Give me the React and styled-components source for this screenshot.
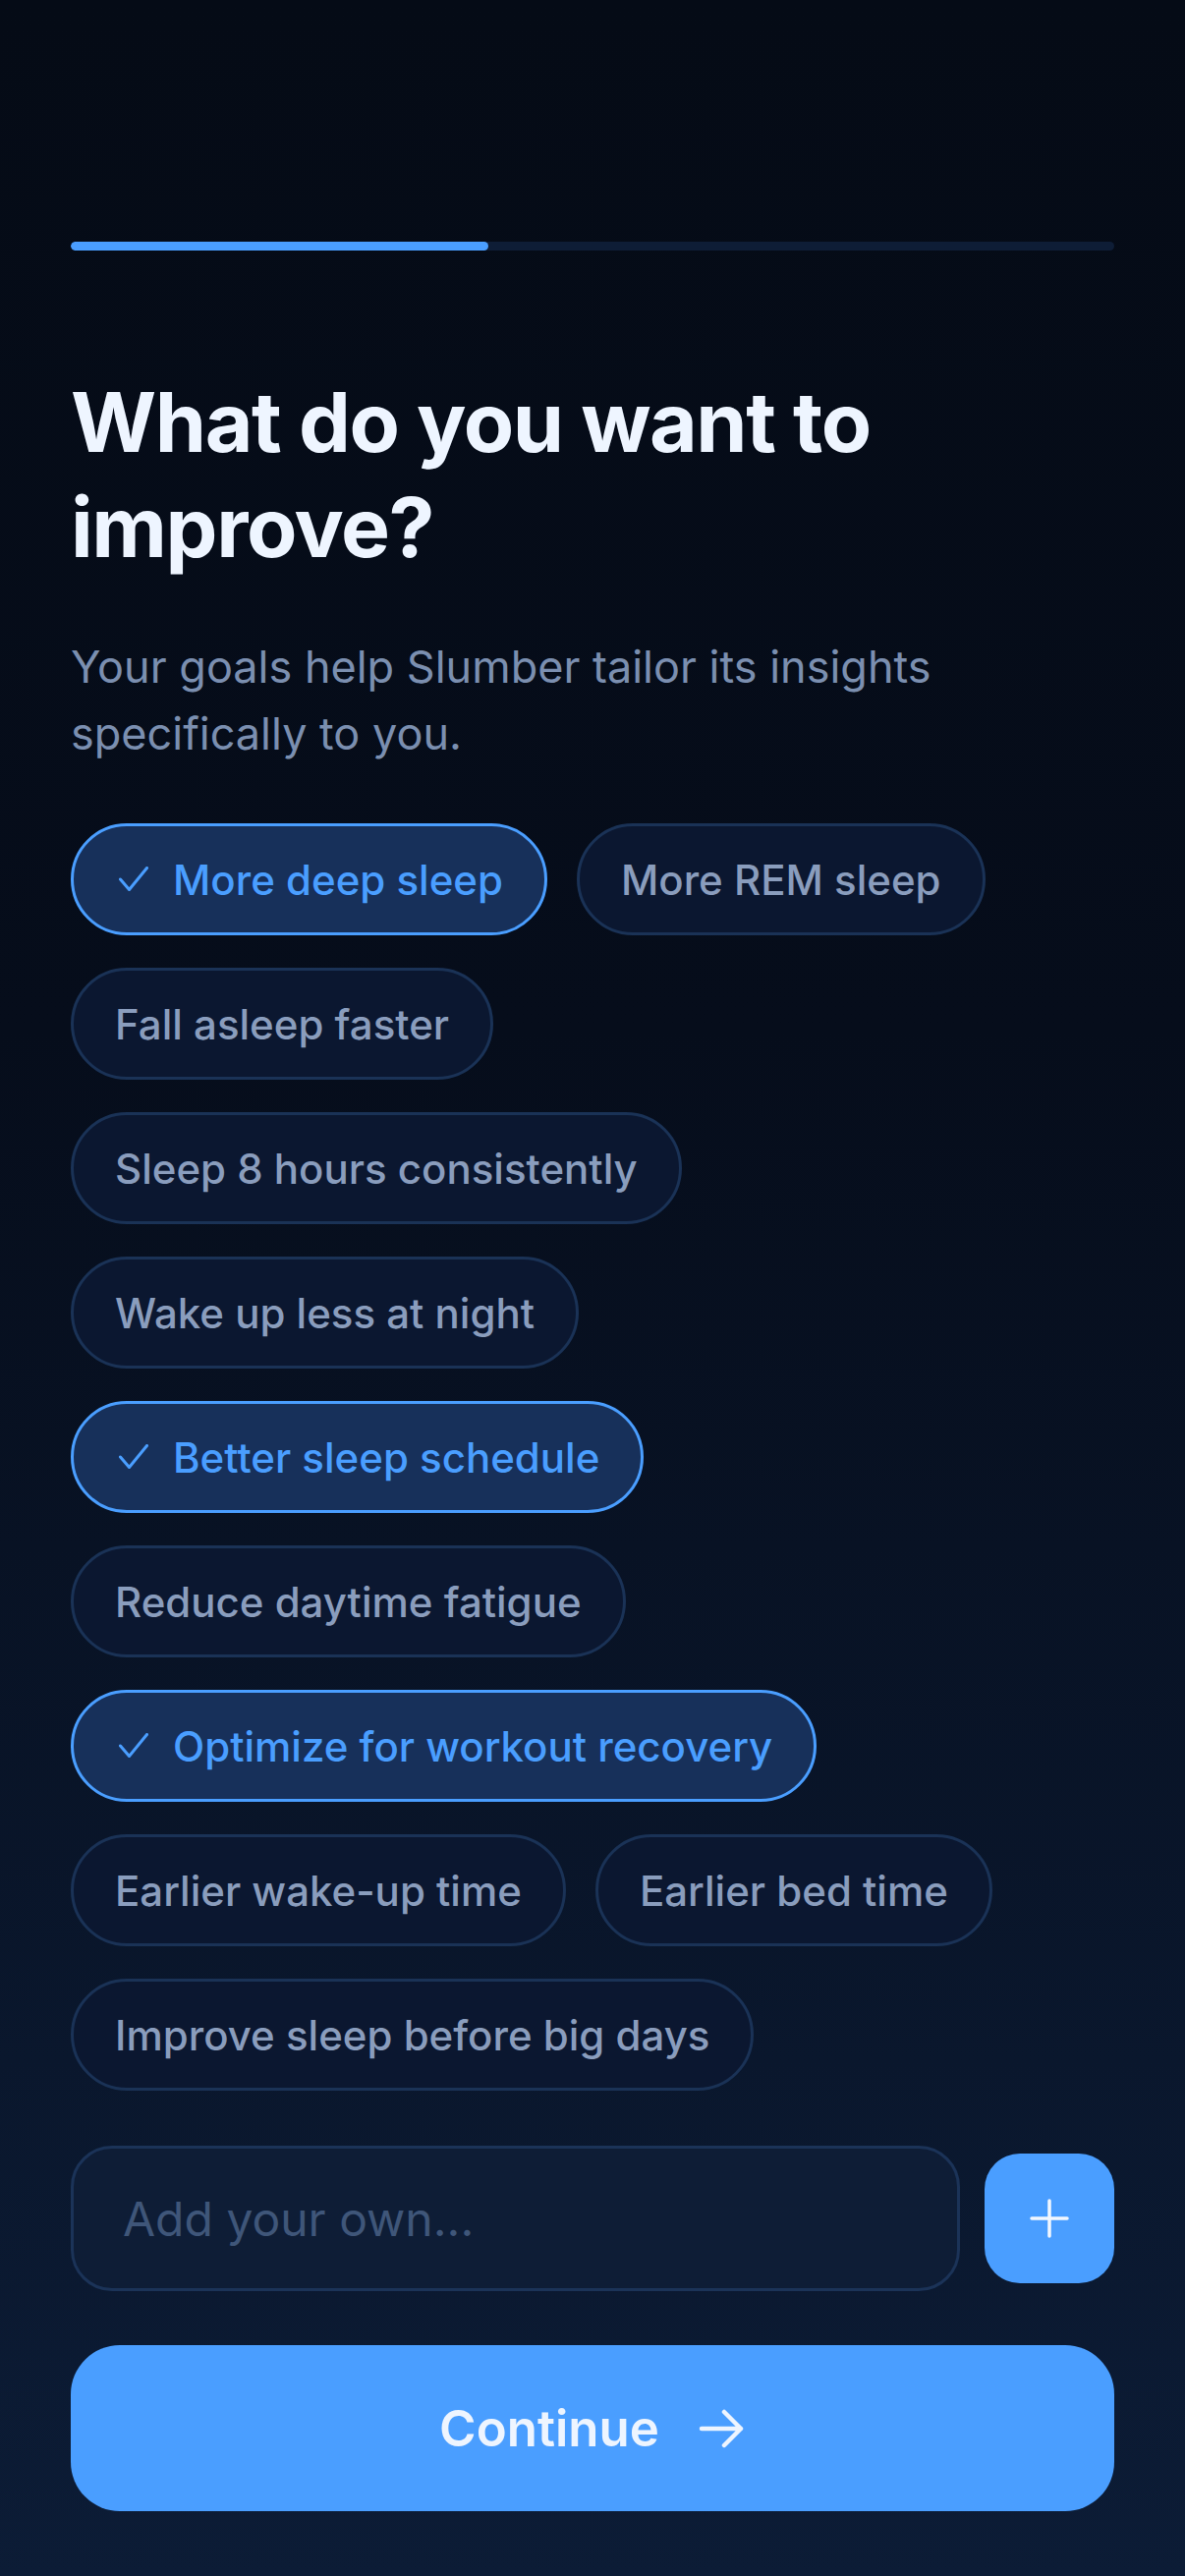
import React, { useState } from 'react';
import styled, { createGlobalStyle } from 'styled-components';

const GlobalStyle = createGlobalStyle`
  html, body {
    margin: 0;
    padding: 0;
  }
  body {
    background: linear-gradient(180deg, #050b16 0%, #060d1b 40%, #0c1c36 100%);
    font-family: Inter, "Noto Sans", sans-serif;
    -webkit-font-smoothing: antialiased;
  }
`;

const Page = styled.div`
  min-height: 2622px;
  box-sizing: border-box;
  padding: 246px 72px 66px;
  display: flex;
  flex-direction: column;
`;

const Progress = styled.div`
  height: 9px;
  border-radius: 5px;
  background: #0e1d36;
  overflow: hidden;
`;

const ProgressFill = styled.div`
  height: 100%;
  border-radius: 5px;
  background: #4a9eff;
`;

const Title = styled.h1`
  margin: 121px 0 0;
  font-size: 84px;
  line-height: 107px;
  font-weight: 700;
  letter-spacing: -1.4px;
  color: #eef5ff;
`;

const Subtitle = styled.p`
  margin: 55px 0 0;
  font-size: 45px;
  line-height: 68px;
  color: #7b8fb0;
  max-width: 900px;
`;

const Chips = styled.div`
  margin-top: 57px;
  display: flex;
  flex-wrap: wrap;
  row-gap: 33px;
  column-gap: 30px;
`;

const Chip = styled.button`
  height: 114px;
  box-sizing: border-box;
  margin: 0;
  padding: 0 42px;
  display: flex;
  align-items: center;
  gap: 25px;
  border-radius: 57px;
  border: 3px solid ${({ $on }) => ($on ? '#4a9eff' : '#1a3256')};
  background: ${({ $on }) => ($on ? '#17305a' : '#0b1730')};
  color: ${({ $on }) => ($on ? '#4a9eff' : '#8a9dbd')};
  font-family: Inter, "Noto Sans", sans-serif;
  font-size: 42px;
  font-weight: 500;
  cursor: pointer;
`;

const CheckIcon = styled.svg`
  margin-left: 4px;
  flex-shrink: 0;
`;

const AddRow = styled.div`
  margin-top: 56px;
  display: flex;
  align-items: center;
  gap: 25px;
`;

const Input = styled.input`
  flex: 1;
  min-width: 0;
  height: 148px;
  box-sizing: border-box;
  padding: 0 50px;
  border-radius: 42px;
  border: 3px solid #1b3358;
  background: #0e1d36;
  color: #eef5ff;
  font-family: Inter, "Noto Sans", sans-serif;
  font-size: 48px;
  outline: none;
  &::placeholder {
    color: #3f5679;
  }
`;

const AddButton = styled.button`
  width: 132px;
  height: 132px;
  flex-shrink: 0;
  border: none;
  border-radius: 36px;
  background: #4a9eff;
  display: flex;
  align-items: center;
  justify-content: center;
  cursor: pointer;
`;

const ContinueButton = styled.button`
  margin-top: 55px;
  height: 169px;
  border: none;
  border-radius: 50px;
  background: #4a9eff;
  color: #eef5ff;
  font-family: Inter, "Noto Sans", sans-serif;
  font-size: 51px;
  font-weight: 600;
  display: flex;
  align-items: center;
  justify-content: center;
  gap: 40px;
  cursor: pointer;
`;

const GOALS = [
  'More deep sleep',
  'More REM sleep',
  'Fall asleep faster',
  'Sleep 8 hours consistently',
  'Wake up less at night',
  'Better sleep schedule',
  'Reduce daytime fatigue',
  'Optimize for workout recovery',
  'Earlier wake-up time',
  'Earlier bed time',
  'Improve sleep before big days',
];

const CheckMark = () => (
  <CheckIcon width="30" height="26" viewBox="0 0 30 26" fill="none">
    <polyline points="1.5,13 10.5,23.5 28.5,1.5" stroke="#4a9eff" strokeWidth="3" strokeLinecap="round" strokeLinejoin="round" />
  </CheckIcon>
);

const Plus = () => (
  <svg width="40" height="40" viewBox="0 0 40 40">
    <path d="M20 2v36M2 20h36" stroke="#f2f7ff" strokeWidth="3.5" strokeLinecap="round" />
  </svg>
);

const Arrow = () => (
  <svg width="48" height="40" viewBox="0 0 48 40" fill="none">
    <path d="M3 20h40M26 3l17 17-17 17" stroke="#eef5ff" strokeWidth="4.5" strokeLinecap="round" strokeLinejoin="round" />
  </svg>
);

export default function App() {
  const [picked, setPicked] = useState(['More deep sleep', 'Better sleep schedule', 'Optimize for workout recovery']);
  const toggle = (g) => setPicked((p) => (p.includes(g) ? p.filter((x) => x !== g) : [...p, g]));

  return (
    <>
      <GlobalStyle />
      <Page>
        <Progress>
          <ProgressFill style={{ width: '40%' }} />
        </Progress>
        <Title>
          What do you want to
          <br />
          improve?
        </Title>
        <Subtitle>Your goals help Slumber tailor its insights specifically to you.</Subtitle>
        <Chips>
          {GOALS.map((g) => {
            const on = picked.includes(g);
            return (
              <Chip key={g} $on={on} onClick={() => toggle(g)}>
                {on && <CheckMark />}
                {g}
              </Chip>
            );
          })}
        </Chips>
        <AddRow>
          <Input placeholder="Add your own..." />
          <AddButton>
            <Plus />
          </AddButton>
        </AddRow>
        <ContinueButton>
          Continue
          <Arrow />
        </ContinueButton>
      </Page>
    </>
  );
}
